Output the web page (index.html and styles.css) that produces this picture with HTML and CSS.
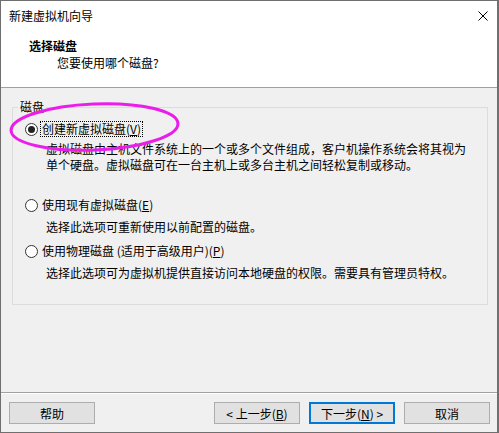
FILE: index.html
```html
<!DOCTYPE html>
<html lang="zh-CN">
<head>
  <meta charset="UTF-8">
  <title>新建虚拟机向导</title>
  <link rel="stylesheet" href="styles.css">
</head>
<body>
  <div class="window">
    <div class="titlebar">
      <span class="title">新建虚拟机向导</span>
      <svg class="close" width="10" height="10" viewBox="0 0 10 10">
        <path d="M0.5 0.5 L9.5 9.5 M9.5 0.5 L0.5 9.5" stroke="#000" stroke-width="1" fill="none"/>
      </svg>
    </div>
    <div class="header">
      <div class="header-title">选择磁盘</div>
      <div class="header-sub">您要使用哪个磁盘?</div>
    </div>

    <div class="content">
      <fieldset class="group">
        <legend>磁盘</legend>
        <div class="option">
          <span class="radio checked"></span>
          <span class="label focus">创建新虚拟磁盘(<u>V</u>)</span>
        </div>
        <div class="desc desc-first">虚拟磁盘由主机文件系统上的一个或多个文件组成，客户机操作系统会将其视为<br>单个硬盘。虚拟磁盘可在一台主机上或多台主机之间轻松复制或移动。</div>

        <div class="option option-gap">
          <span class="radio"></span>
          <span class="label">使用现有虚拟磁盘(<u>E</u>)</span>
        </div>
        <div class="desc">选择此选项可重新使用以前配置的磁盘。</div>

        <div class="option">
          <span class="radio"></span>
          <span class="label">使用物理磁盘 (适用于高级用户)(<u>P</u>)</span>
        </div>
        <div class="desc">选择此选项可为虚拟机提供直接访问本地硬盘的权限。需要具有管理员特权。</div>
      </fieldset>
    </div>

    <div class="footer">
      <button class="btn">帮助</button>
      <div class="nav">
        <button class="btn">&lt; 上一步(<u>B</u>)</button>
        <button class="btn default">下一步(<u>N</u>) &gt;</button>
        <button class="btn">取消</button>
      </div>
    </div>

    <!-- 标注圈 -->
    <svg class="mark" width="499" height="433" viewBox="0 0 499 433">
      <ellipse cx="94.5" cy="127" rx="83.5" ry="23" transform="rotate(-2.4 94.5 127)" fill="none" stroke="#ea1dea" stroke-width="3"/>
    </svg>
  </div>
</body>
</html>
```

FILE: styles.css
```css
* {
  box-sizing: border-box;
}
body {
  margin: 0;
  font-family: "Noto Sans CJK SC", "Noto Sans", sans-serif;
  font-size: 12px;
  color: #000;
  background: #f0f0f0;
}
.window {
  position: relative;
  width: 499px;
  height: 433px;
  border: 1px solid #6f6f6f;
  border-right-width: 2px;
  background: #f0f0f0;
  display: flex;
  flex-direction: column;
}
.titlebar {
  height: 29px;
  background: #fff;
  display: flex;
  align-items: center;
  justify-content: space-between;
  padding: 0 9px 0 8px;
}
.title {
  line-height: 16px;
}
.header {
  height: 58px;
  background: #fff;
  border-bottom: 1px solid #a0a0a0;
  padding: 8px 0 0 28px;
  line-height: 16px;
}
.header-title {
  font-weight: bold;
}
.header-sub {
  margin-top: 1px;
  padding-left: 28px;
}
.content {
  height: 304px;
  padding: 11px 0 0 11px;
}
.group {
  margin: 0;
  width: 476px;
  padding: 6px 12px 23px 12px;
  border: 1px solid #dcdcdc;
}
.group legend {
  margin-left: -7px;
  padding: 0 2px;
  line-height: 16px;
}
.option {
  display: flex;
  align-items: center;
  height: 16px;
  margin-top: 8px;
}
.option:first-of-type {
  margin-top: 0;
}
.option-gap {
  margin-top: 24px;
}
.radio {
  width: 13px;
  height: 13px;
  border: 1px solid #333;
  border-radius: 50%;
  background: #fff;
  display: flex;
  align-items: center;
  justify-content: center;
}
.radio.checked::after {
  content: "";
  width: 7px;
  height: 7px;
  border-radius: 50%;
  background: #222;
}
.label {
  margin-left: 2px;
  height: 16px;
  line-height: 14px;
  padding: 0 1px;
  border: 1px dotted transparent;
}
.label.focus {
  border-color: #000;
}
.desc {
  margin-top: 6px;
  padding-left: 21px;
  line-height: 16px;
}
.desc-first {
  margin-top: 4px;
}
.footer {
  flex-grow: 1;
  border-top: 1px solid #a0a0a0;
  box-shadow: inset 0 1px 0 #fff;
  display: flex;
  padding: 9px 7px 0 8px;
}
.nav {
  margin-left: auto;
  display: flex;
  gap: 9px;
}
.btn {
  width: 86px;
  height: 22px;
  padding: 0;
  margin: 0;
  font-family: inherit;
  font-size: 12px;
  color: #000;
  background: #e1e1e1;
  border: 1px solid #adadad;
}
.btn.default {
  border: 2px solid #0078d7;
}
.btn u, .label u {
  text-underline-offset: 1px;
}
.mark {
  position: absolute;
  left: -1px;
  top: -1px;
  pointer-events: none;
}
```
